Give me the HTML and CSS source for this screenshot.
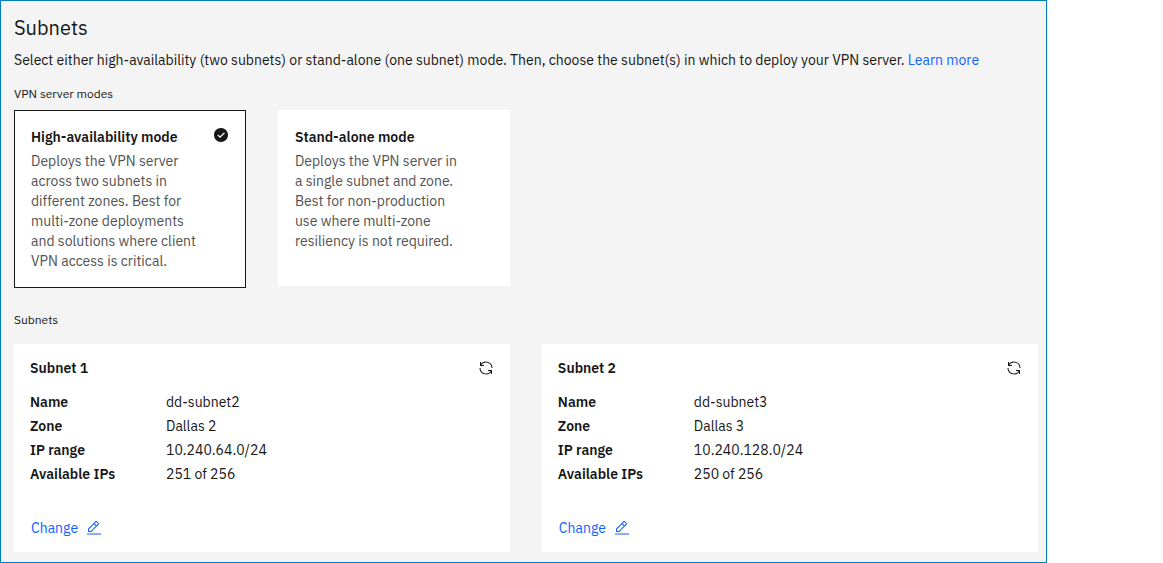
FILE: index.html
```html
<!DOCTYPE html>
<html lang="en">
<head>
<meta charset="utf-8">
<title>Subnets</title>
<meta name="viewport" content="width=device-width, initial-scale=1">
<link rel="stylesheet" href="styles.css">
</head>
<body>
<svg class="sprite" aria-hidden="true">
  <symbol id="check" viewBox="0 0 16 16"><path d="M8 1C4.1 1 1 4.1 1 8s3.100 7 7 7 7-3.100 7-7-3.100-7-7-7zM7 11L4.300 8.300l.9-.8L7 9.300l4-3.900.9.800L7 11z"/></symbol>
  <symbol id="renew" viewBox="0 0 32 32"><path d="M12 10H6.780A11 11 0 0 1 27 16h2A13 13 0 0 0 6 7.680V4H4v8h8z"/><path d="M20 22h5.220A11 11 0 0 1 5 16H3a13 13 0 0 0 23 8.320V28h2V20H20z"/></symbol>
  <symbol id="edit" viewBox="0 0 32 32"><path d="M2 27H30V29H2z"/><path d="M25.400 9c.8-.8.8-2 0-2.800l-3.600-3.600c-.8-.8-2-.8-2.800 0l-15 15V24h6.400L25.400 9zM20.400 4L24 7.600l-3 3L17.400 7 20.400 4zM6 22v-3.600l10-10 3.600 3.600-10 10H6z"/></symbol>
</svg>
<main class="panel">
  <h1 class="title">Subnets</h1>
  <p class="intro">Select either high-availability (two subnets) or stand-alone (one subnet) mode. Then, choose the subnet(s) in which to deploy your VPN server. <a class="link" href="#">Learn more</a></p>

  <fieldset class="modes">
    <legend class="label">VPN server modes</legend>
    <div class="tiles">
      <label class="tile">
        <input class="tile-input" type="radio" name="mode" checked>
        <span class="tile-title">High-availability mode</span>
        <span class="tile-text">Deploys the VPN server across two subnets in different zones. Best for multi-zone deployments and solutions where client VPN access is critical.</span>
        <svg class="icon tile-check" aria-hidden="true"><use href="#check"/></svg>
      </label>
      <label class="tile">
        <input class="tile-input" type="radio" name="mode">
        <span class="tile-title">Stand-alone mode</span>
        <span class="tile-text">Deploys the VPN server in a single subnet and zone. Best for non-production use where multi-zone resiliency is not required.</span>
        <svg class="icon tile-check" aria-hidden="true"><use href="#check"/></svg>
      </label>
    </div>
  </fieldset>

  <h2 class="label subnets-label">Subnets</h2>
  <div class="cards">
    <section class="card">
      <header class="card-head">
        <h3 class="card-title">Subnet 1</h3>
        <button class="icon-button" type="button" aria-label="Refresh subnet 1"><svg class="icon" aria-hidden="true"><use href="#renew"/></svg></button>
      </header>
      <dl class="details">
        <dt>Name</dt><dd>dd-subnet2</dd>
        <dt>Zone</dt><dd>Dallas 2</dd>
        <dt>IP range</dt><dd>10.240.64.0/24</dd>
        <dt>Available IPs</dt><dd>251 of 256</dd>
      </dl>
      <button class="change" type="button">Change <svg class="icon" aria-hidden="true"><use href="#edit"/></svg></button>
    </section>
    <section class="card">
      <header class="card-head">
        <h3 class="card-title">Subnet 2</h3>
        <button class="icon-button" type="button" aria-label="Refresh subnet 2"><svg class="icon" aria-hidden="true"><use href="#renew"/></svg></button>
      </header>
      <dl class="details">
        <dt>Name</dt><dd>dd-subnet3</dd>
        <dt>Zone</dt><dd>Dallas 3</dd>
        <dt>IP range</dt><dd>10.240.128.0/24</dd>
        <dt>Available IPs</dt><dd>250 of 256</dd>
      </dl>
      <button class="change" type="button">Change <svg class="icon" aria-hidden="true"><use href="#edit"/></svg></button>
    </section>
  </div>
</main>
</body>
</html>
```

FILE: styles.css
```css
* { box-sizing: border-box; }

body {
  margin: 0;
  background: #fff;
  color: #161616;
  font: 14px/20px "IBM Plex Sans", Inter, sans-serif;
}

h1, h2, h3, p, dl, dd { margin: 0; }

button {
  padding: 0;
  border: 0;
  background: none;
  color: inherit;
  font: inherit;
  cursor: pointer;
}

.sprite { display: none; }

.icon {
  display: block;
  flex: none;
  width: 16px;
  height: 16px;
  fill: currentColor;
}

.panel {
  width: 90%;
  padding: 13px 8px 10px 13px;
  border: 1px solid #0080bf;
  background: #f4f4f4;
}

.title {
  margin-bottom: 8px;
  font-size: 20px;
  line-height: 28px;
  font-weight: 400;
}

.link { color: #0f62fe; text-decoration: none; }

.label {
  padding: 0;
  font-size: 12px;
  line-height: 16px;
  font-weight: 400;
}

.modes {
  min-width: 0;
  margin: 16px 0 0;
  padding: 0;
  border: 0;
}

.tiles {
  display: grid;
  grid-template-columns: repeat(4, 1fr);
  align-items: start;
  gap: 32px;
  padding-top: 8px;
}

.tile {
  position: relative;
  display: flex;
  flex-direction: column;
  gap: 4px;
  min-height: 176px;
  padding: 16px;
  border: 1px solid #fff;
  background: #fff;
  cursor: pointer;
}

.tile:has(:checked) { border-color: #161616; }

.tile-input {
  position: absolute;
  inset: 0;
  margin: 0;
  appearance: none;
  cursor: pointer;
}

.tile-title, .card-title, .details dt { font-weight: 600; }

.card-title { font-size: inherit; }

.tile-text { padding-right: 28px; color: #525252; }

.tile-check {
  position: absolute;
  top: 16px;
  right: 16px;
  visibility: hidden;
}

.tile-input:checked ~ .tile-check { visibility: visible; }

.subnets-label { margin: 24px 0 16px; }

.cards {
  display: grid;
  grid-template-columns: repeat(2, 1fr);
  gap: 32px;
}

.card { padding: 14px 16px; background: #fff; }

.card-head {
  display: flex;
  align-items: center;
  justify-content: space-between;
}

.details {
  display: grid;
  grid-template-columns: 120px 1fr;
  gap: 4px 16px;
  margin: 14px 0 34px;
}

.change {
  display: flex;
  align-items: center;
  gap: 8px;
  border: 1px solid transparent;
  margin: -1px 0;
  color: #0f62fe;
}
```
